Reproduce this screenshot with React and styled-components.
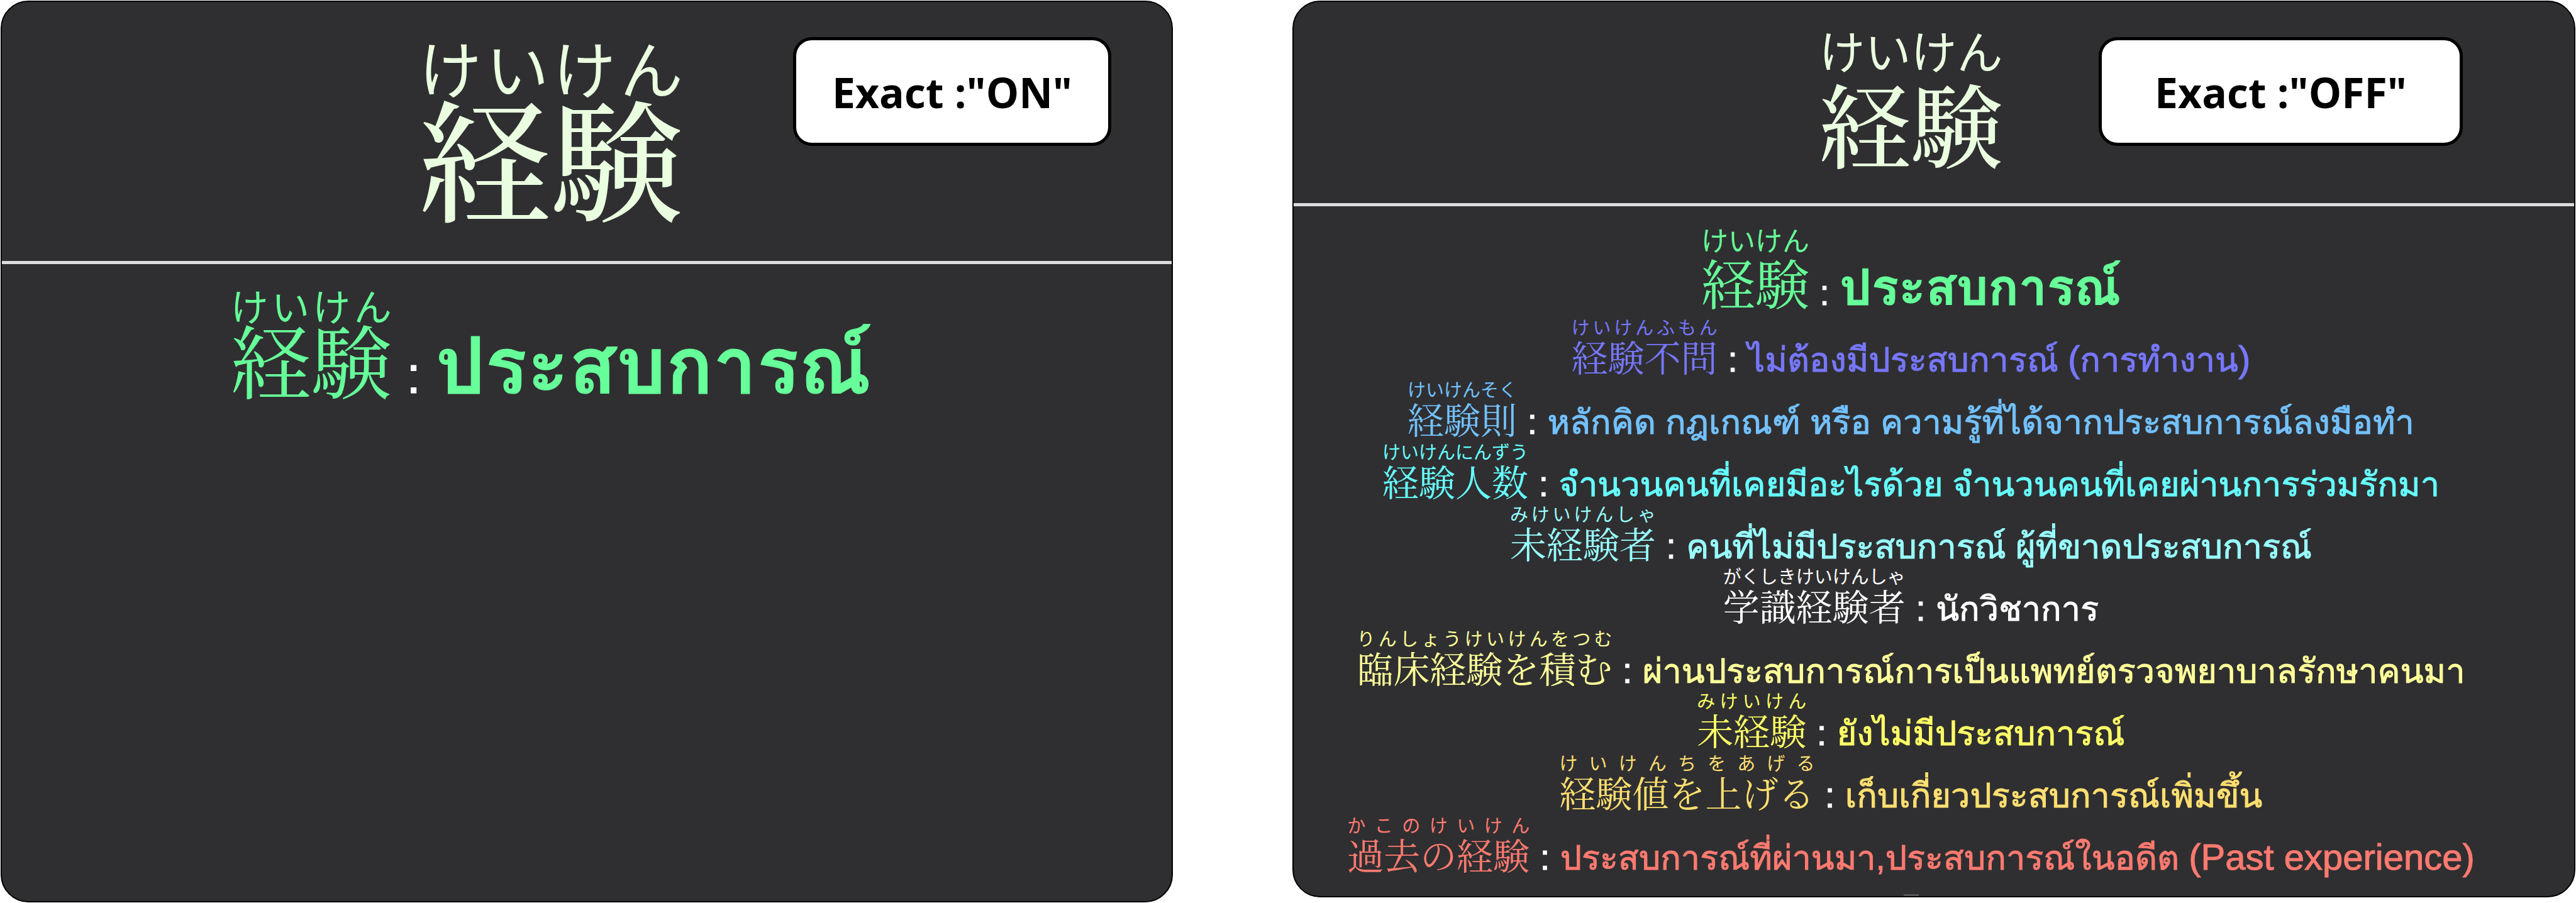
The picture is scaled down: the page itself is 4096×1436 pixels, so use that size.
import React from 'react';
import styled, { createGlobalStyle } from 'styled-components';

const Global = createGlobalStyle`
  * { box-sizing: border-box; }
  body {
    margin: 0;
    background: #fff;
    font-family: "Liberation Sans", Loma, "Noto Sans CJK JP", sans-serif;
  }
`;

const Page = styled.main`
  display: grid;
  grid-template-columns: 1864fr 2040fr;
  column-gap: 190px;
  align-items: start;
  min-height: 100vh;
  padding: 1px;
`;

const Panel = styled.section`
  position: relative;
  align-self: ${p => (p.$fill ? 'stretch' : 'start')};
  background: #2f2f31;
  border: 2px solid #000;
  border-radius: 44px;
  overflow: hidden;
`;

const Header = styled.header`
  display: flex;
  justify-content: center;
  padding: ${p => p.$pad};
  border-bottom: 5px solid #dcdcdc;
`;

const Heading = styled.h1`
  margin: 0;
  font-size: inherit;
  font-weight: 500;
  line-height: 1;
  color: #eaffe0;
`;

const Term = styled.ruby`
  display: flex;
  flex-direction: column;
  font-family: "Noto Serif CJK JP", "Noto Sans CJK JP", serif;
  font-size: ${p => p.$size}px;
  line-height: ${p => p.$line}px;
`;

const Reading = styled.rt`
  display: block;
  order: -1;
  font-family: "Noto Sans CJK JP", sans-serif;
  font-size: ${p => p.$size}px;
  font-weight: 400;
  line-height: ${p => p.$line}px;
  text-align: justify;
  text-align-last: justify;
`;

const Badge = styled.div`
  position: absolute;
  top: 56px;
  right: ${p => p.$right}px;
  display: flex;
  align-items: center;
  justify-content: center;
  width: ${p => p.$width}px;
  height: 173px;
  background: #fff;
  border: 5px solid #000;
  border-radius: 30px;
  color: #000;
  font-family: "Open Sans", sans-serif;
  font-size: 66px;
  font-weight: 700;
  line-height: 90px;
  white-space: nowrap;
`;

const Entries = styled.ul`
  display: flex;
  flex-direction: column;
  align-items: center;
  margin: 0;
  padding: ${p => p.$pad};
  list-style: none;
`;

const Entry = styled.li`
  display: flex;
  align-items: last baseline;
  padding-bottom: ${p => p.$below}px;
  color: ${p => p.$color};
  white-space: pre;
`;

const Colon = styled.span`
  color: #fff;
  font-size: ${p => p.$size}px;
  line-height: ${p => p.$line}px;
  -webkit-text-stroke: 1px currentColor;
`;

const Meaning = styled.span`
  font-size: ${p => p.$size}px;
  font-weight: ${p => (p.$bold ? 700 : 400)};
  line-height: ${p => p.$line}px;
  -webkit-text-stroke: 1px currentColor;
`;

const Latin = styled.span`
  font-size: 58px;
`;

const Footer = styled.footer`
  display: flex;
  justify-content: center;
  padding-right: 73px;
`;

const Handle = styled.div`
  width: 24px;
  height: 3px;
  background: #58585a;
`;

const SIZES = {
  headOn: { base: 210, baseLine: 174, kana: 100, kanaLine: 107 },
  headOff: { base: 146, baseLine: 141, kana: 73, kanaLine: 90 },
  mainOn: { base: 128, baseLine: 104, kana: 60, kanaLine: 66, colon: 84, meaning: 124, textLine: 60, below: 20 },
  mainOff: { base: 86, baseLine: 83, kana: 43, kanaLine: 54, colon: 58, meaning: 80, textLine: 40, below: 10 },
  row: { base: 58, baseLine: 55, kana: 29, kanaLine: 39, colon: 58, meaning: 54, textLine: 30, below: 5 },
};

const ROWS = [
  { color: '#7777ff', base: '経験不問', kana: 'けいけんふもん', meaning: <>ไม่ต้องมีประสบการณ์ <Latin>(</Latin>การทำงาน<Latin>)</Latin></> },
  { color: '#73c1ff', base: '経験則', kana: 'けいけんそく', meaning: 'หลักคิด กฎเกณฑ์ หรือ ความรู้ที่ได้จากประสบการณ์ลงมือทำ' },
  { color: '#66ffff', base: '経験人数', kana: 'けいけんにんずう', meaning: 'จำนวนคนที่เคยมีอะไรด้วย จำนวนคนที่เคยผ่านการร่วมรักมา' },
  { color: '#99ffff', base: '未経験者', kana: 'みけいけんしゃ', meaning: 'คนที่ไม่มีประสบการณ์ ผู้ที่ขาดประสบการณ์' },
  { color: '#ffffff', base: '学識経験者', kana: 'がくしきけいけんしゃ', meaning: 'นักวิชาการ' },
  { color: '#ffff99', base: '臨床経験を積む', kana: 'りんしょうけいけんをつむ', meaning: 'ผ่านประสบการณ์การเป็นแพทย์ตรวจพยาบาลรักษาคนมา' },
  { color: '#ffff66', base: '未経験', kana: 'みけいけん', meaning: 'ยังไม่มีประสบการณ์' },
  { color: '#ffdf70', base: '経験値を上げる', kana: 'けいけんちをあげる', meaning: 'เก็บเกี่ยวประสบการณ์เพิ่มขึ้น' },
  { color: '#ff7a70', base: '過去の経験', kana: 'かこのけいけん', meaning: <>ประสบการณ์ที่ผ่านมา,ประสบการณ์ในอดีต <Latin>(Past experience)</Latin></> },
];

function Word({ size, base, kana }) {
  return (
    <Term lang="ja" $size={size.base} $line={size.baseLine}>
      {base}
      <Reading $size={size.kana} $line={size.kanaLine}>{kana}</Reading>
    </Term>
  );
}

function Definition({ size, color, base, kana, meaning, bold }) {
  return (
    <Entry $color={color} $below={size.below}>
      <Word size={size} base={base} kana={kana} />
      <Colon $size={size.colon} $line={size.textLine}> : </Colon>
      <Meaning lang="th" $size={size.meaning} $line={size.textLine} $bold={bold}>{meaning}</Meaning>
    </Entry>
  );
}

const MAIN = { color: '#66ff99', base: '経験', kana: 'けいけん', meaning: 'ประสบการณ์', bold: true };

export default function App() {
  return (
    <>
      <Global />
      <Page>
        <Panel $fill>
          <Header $pad="49px 114px 82px 0">
            <Heading><Word size={SIZES.headOn} base="経験" kana="けいけん" /></Heading>
          </Header>
          <Badge $right={96} $width={506}>Exact :"ON"</Badge>
          <Entries $pad="32px 114px 0 0">
            <Definition size={SIZES.mainOn} {...MAIN} />
          </Entries>
        </Panel>
        <Panel>
          <Header $pad="30px 73px 59px 0">
            <Heading><Word size={SIZES.headOff} base="経験" kana="けいけん" /></Heading>
          </Header>
          <Badge $right={177} $width={579}>Exact :"OFF"</Badge>
          <Entries $pad="25px 73px 31px 0">
            <Definition size={SIZES.mainOff} {...MAIN} />
            {ROWS.map(row => <Definition key={row.base} size={SIZES.row} {...row} />)}
          </Entries>
          <Footer><Handle /></Footer>
        </Panel>
      </Page>
    </>
  );
}
